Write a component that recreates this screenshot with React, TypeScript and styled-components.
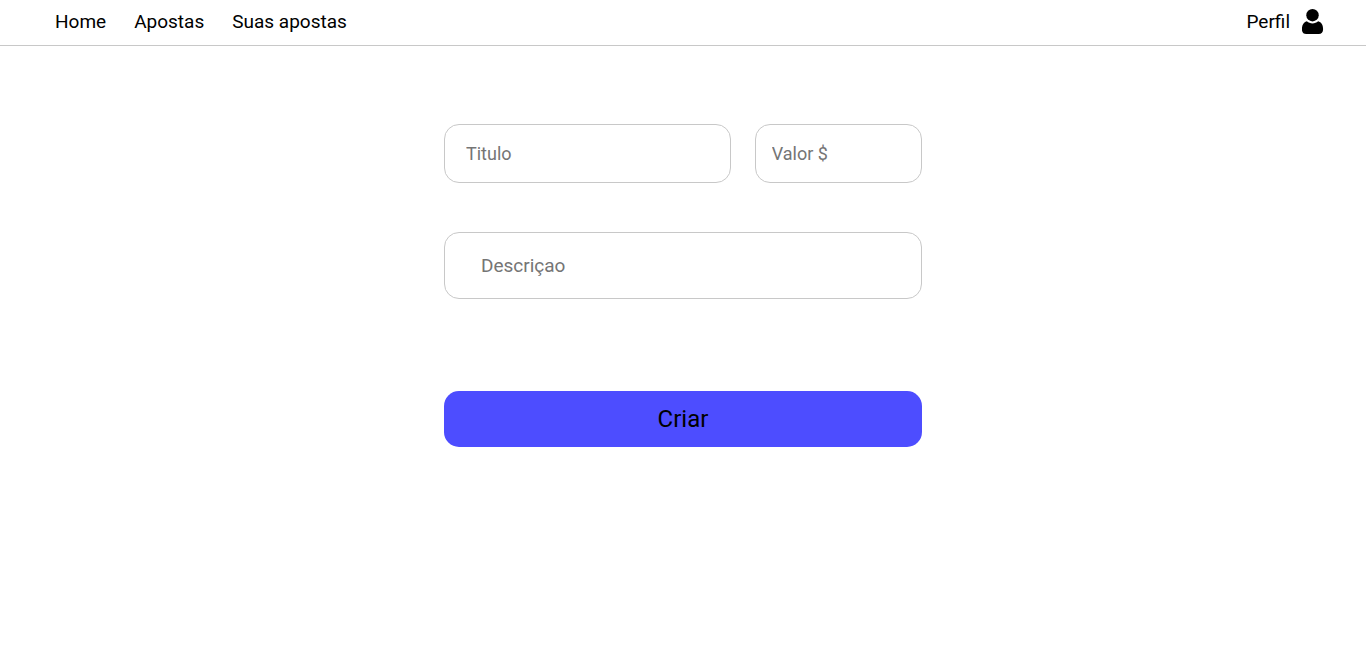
import React from 'react';
import styled, { createGlobalStyle } from 'styled-components';

const GlobalStyle = createGlobalStyle`
  * {
    box-sizing: border-box;
    margin: 0;
    padding: 0;
  }
  body {
    background: #fff;
    color: #000;
    font-family: Roboto, sans-serif;
  }
`;

const Header = styled.header`
  display: flex;
  justify-content: space-between;
  align-items: center;
  height: 46px;
  padding: 0 42px 2px 55px;
  border-bottom: 1px solid #c8c8c8;
`;

const Nav = styled.nav`
  display: flex;
  gap: 28px;
`;

const NavLink = styled.a`
  display: flex;
  align-items: center;
  gap: 12px;
  color: #000;
  font-size: 19px;
  line-height: 24px;
  text-decoration: none;
`;

const Form = styled.form`
  display: flex;
  flex-direction: column;
  width: 35%;
  margin: 78px auto 0;
`;

const Row = styled.div`
  display: flex;
  justify-content: space-between;
  margin-bottom: 49px;
`;

const Field = styled.input<{ $width: string; $height: number; $indent: number; $size: number }>`
  width: ${(p) => p.$width};
  height: ${(p) => p.$height}px;
  padding: 0 ${(p) => p.$indent}px;
  border: 1px solid #c8c8c8;
  border-radius: 15px;
  background: #fff;
  font-family: inherit;
  font-size: ${(p) => p.$size}px;
  outline: none;

  &::placeholder {
    color: #757575;
  }
`;

const SubmitButton = styled.button`
  height: 56px;
  margin-top: 92px;
  border: none;
  border-radius: 15px;
  background: #4d4dff;
  color: #000;
  font-family: inherit;
  font-size: 24px;
  cursor: pointer;
`;

const UserIcon = () => (
  <svg width="22" height="26" viewBox="0 0 22 26" aria-hidden="true">
    <circle cx="10.500" cy="6.200" r="6.200" />
    <path d="M4.900 12.300C6.500 13.700 8.300 14.400 10.500 14.400s4-.7 5.600-2.100c3.300.7 5 3.900 5 7.900 0 3-1.600 4.800-4.400 4.800H4.300C1.500 25-.1 23.200-.1 20.200c0-4 1.700-7.200 5-7.900z" />
  </svg>
);

export default function App() {
  return (
    <>
      <GlobalStyle />
      <Header>
        <Nav>
          <NavLink href="#home">Home</NavLink>
          <NavLink href="#apostas">Apostas</NavLink>
          <NavLink href="#suas-apostas">Suas apostas</NavLink>
        </Nav>
        <NavLink href="#perfil">
          Perfil
          <UserIcon />
        </NavLink>
      </Header>
      <main>
        <Form onSubmit={(e) => e.preventDefault()}>
          <Row>
            <Field type="text" aria-label="Titulo" placeholder="Titulo" $width="60%" $height={59} $indent={21} $size={18} />
            <Field type="text" aria-label="Valor $" placeholder="Valor $" $width="35%" $height={59} $indent={16} $size={18} />
          </Row>
          <Field type="text" aria-label="Descriçao" placeholder="Descriçao" $width="100%" $height={67} $indent={36} $size={19} />
          <SubmitButton type="submit">Criar</SubmitButton>
        </Form>
      </main>
    </>
  );
}
